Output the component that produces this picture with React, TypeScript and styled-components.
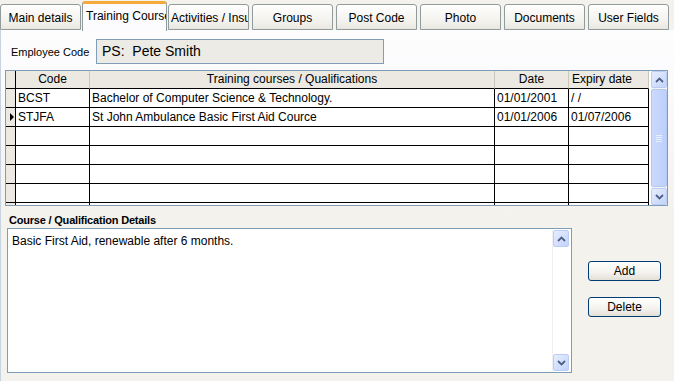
import React from 'react'
import styled, { createGlobalStyle } from 'styled-components'

const GlobalStyle = createGlobalStyle`
  body {
    margin: 0;
    overflow: hidden;
    font-family: 'Liberation Sans', Arial, sans-serif;
  }
`

const tabs = [
  'Main details',
  'Training Courses',
  'Activities / Insurance',
  'Groups',
  'Post Code',
  'Photo',
  'Documents',
  'User Fields',
]

const rows = [
  { code: 'BCST', title: 'Bachelor of Computer Science & Technology.', date: '01/01/2001', expiry: '/ /', current: false },
  { code: 'STJFA', title: 'St John Ambulance Basic First Aid Cource', date: '01/01/2006', expiry: '01/07/2006', current: true },
  { code: '', title: '', date: '', expiry: '', current: false },
  { code: '', title: '', date: '', expiry: '', current: false },
  { code: '', title: '', date: '', expiry: '', current: false },
  { code: '', title: '', date: '', expiry: '', current: false },
  { code: '', title: '', date: '', expiry: '', current: false },
]

const Arrow: React.FC<{ dir: 'up' | 'down' }> = ({ dir }) => (
  <svg width="9" height="6" viewBox="0 0 9 6">
    <path
      d={dir === 'up' ? 'M1 5 L4.5 1.5 L8 5' : 'M1 1 L4.5 4.5 L8 1'}
      stroke="#4d6185"
      strokeWidth="1.8"
      fill="none"
    />
  </svg>
)

const App: React.FC = () => {
  return (
    <Window>
      <GlobalStyle />
      <TabStrip>
        {tabs.map((t, i) => (
          <Tab key={t} $active={i === 1}>
            {t}
          </Tab>
        ))}
      </TabStrip>
      <TabPage>
        <EmployeeRow>
          <FieldLabel>Employee Code</FieldLabel>
          <ReadOnlyInput>PS:&nbsp; Pete Smith</ReadOnlyInput>
        </EmployeeRow>

        <GridFrame>
          <Table>
            <HeaderCell $indicator />
            <HeaderCell>Code</HeaderCell>
            <HeaderCell>Training courses / Qualifications</HeaderCell>
            <HeaderCell>Date</HeaderCell>
            <HeaderCell $left>Expiry date</HeaderCell>
            {rows.map((r, i) => (
              <React.Fragment key={i}>
                <IndicatorCell>{r.current && <Pointer />}</IndicatorCell>
                <Cell>{r.code}</Cell>
                <Cell>{r.title}</Cell>
                <Cell>{r.date}</Cell>
                <Cell>{r.expiry}</Cell>
              </React.Fragment>
            ))}
          </Table>
          <ScrollBar>
            <ScrollButton>
              <Arrow dir="up" />
            </ScrollButton>
            <Thumb>
              <Grip />
            </Thumb>
            <ScrollButton>
              <Arrow dir="down" />
            </ScrollButton>
          </ScrollBar>
        </GridFrame>

        <SectionTitle>Course / Qualification Details</SectionTitle>
        <DetailsRow>
          <MemoBox>
            <MemoText>Basic First Aid, renewable after 6 months.</MemoText>
            <MemoScroll>
              <ScrollButton>
                <Arrow dir="up" />
              </ScrollButton>
              <ScrollButton>
                <Arrow dir="down" />
              </ScrollButton>
            </MemoScroll>
          </MemoBox>
          <ButtonColumn>
            <Button>Add</Button>
            <Button>Delete</Button>
          </ButtonColumn>
        </DetailsRow>
      </TabPage>
    </Window>
  )
}

export default App

const Window = styled.div`
  width: 674px;
  height: 381px;
  background: #f4f2ed;
  display: flex;
  flex-direction: column;
  overflow: hidden;
  font-size: 12px;
  color: #000;
`

const TabStrip = styled.div`
  display: flex;
  align-items: flex-end;
  gap: 3px;
  height: 30px;
  padding-left: 0;
  background: #f4f2ed;
  position: relative;
  z-index: 1;
`

const Tab = styled.div<{ $active: boolean }>`
  box-sizing: border-box;
  flex-shrink: 0;
  width: ${(p) => (p.$active ? 85 : 81)}px;
  height: ${(p) => (p.$active ? 30 : 26)}px;
  margin: ${(p) => (p.$active ? '0 -2px -1px' : '0')};
  padding: ${(p) => (p.$active ? '4px 3px 0' : '5px 2px 0')};
  border: 1px solid #919b9c;
  border-bottom: ${(p) => (p.$active ? 'none' : '1px solid #919b9c')};
  border-top: ${(p) => (p.$active ? '3px solid #f5aa3b' : '1px solid #919b9c')};
  border-radius: 3px 3px 0 0;
  background: ${(p) => (p.$active ? '#fcfcfe' : 'linear-gradient(#ffffff, #f2f1ec 70%, #e9e7df)')};
  text-align: center;
  white-space: nowrap;
  overflow: hidden;
  font-size: 12px;
  line-height: 16px;
  position: relative;
  z-index: ${(p) => (p.$active ? 2 : 1)};
`

const TabPage = styled.div`
  flex: 1;
  border-top: 1px solid #919b9c;
  border-left: 1px solid #c8d3e0;
  margin-top: -1px;
  padding-left: 4px;
  background: linear-gradient(#fdfdfe 0, #fbfafc 60px, #f4f2ed 185px);
  display: flex;
  flex-direction: column;
`

const EmployeeRow = styled.div`
  display: flex;
  align-items: center;
  gap: 10px;
  margin-top: 9px;
  padding-left: 6px;
`

const FieldLabel = styled.span`
  font-size: 11px;
  width: 75px;
  white-space: nowrap;
`

const ReadOnlyInput = styled.div`
  box-sizing: border-box;
  width: 288px;
  height: 25px;
  border: 1px solid #7f9db9;
  background: #ecebe6;
  font-size: 14px;
  line-height: 23px;
  padding-left: 5px;
`

const GridFrame = styled.div`
  box-sizing: border-box;
  width: 663px;
  height: 136px;
  margin-top: 6px;
  border: 1px solid #7f9db9;
  background: #fff;
  display: flex;
  gap: 2px;
`

const Table = styled.div`
  display: grid;
  grid-template-columns: 10px 74px 405px 74px 80px;
  grid-template-rows: 18px;
  grid-auto-rows: 19px;
  height: 134px;
  overflow: hidden;
`

const HeaderCell = styled.div<{ $indicator?: boolean; $left?: boolean }>`
  box-sizing: border-box;
  background: #ebe9e1;
  border-bottom: 1px solid #000;
  border-right: 1px solid ${(p) => (p.$indicator ? '#000' : '#c9c7bd')};
  text-align: ${(p) => (p.$left ? 'left' : 'center')};
  padding-left: ${(p) => (p.$left ? '3px' : '0')};
  line-height: 17px;
  white-space: nowrap;
  overflow: hidden;
`

const IndicatorCell = styled.div`
  box-sizing: border-box;
  background: #ebe9e1;
  border-bottom: 1px solid #000;
  border-right: 1px solid #000;
  display: flex;
  align-items: center;
  justify-content: flex-end;
  padding-right: 1px;
`

const Pointer = styled.span`
  width: 0;
  height: 0;
  border-top: 4px solid transparent;
  border-bottom: 4px solid transparent;
  border-left: 4px solid #000;
`

const Cell = styled.div`
  box-sizing: border-box;
  border-bottom: 1px solid #000;
  border-right: 1px solid #000;
  padding-left: 2px;
  line-height: 18px;
  white-space: nowrap;
  overflow: hidden;
`

const ScrollBar = styled.div`
  width: 16px;
  display: flex;
  flex-direction: column;
  background: #f3f3ef;
`

const ScrollButton = styled.div`
  box-sizing: border-box;
  width: 16px;
  height: 17px;
  flex-shrink: 0;
  border: 1px solid #bccdf5;
  border-radius: 2px;
  background: linear-gradient(135deg, #e6eefe, #c3d3fb);
  display: flex;
  align-items: center;
  justify-content: center;
`

const Thumb = styled.div`
  box-sizing: border-box;
  flex: 1;
  margin: 1px 0;
  border: 1px solid #b4c7f4;
  border-radius: 2px;
  background: linear-gradient(to right, #cbd9fd, #bdd0fb);
  display: flex;
  align-items: center;
  justify-content: center;
`

const Grip = styled.div`
  width: 6px;
  height: 7px;
  background: repeating-linear-gradient(#e9efff 0, #e9efff 1px, transparent 1px, transparent 2px);
`

const SectionTitle = styled.div`
  margin: 6px 0 0 4px;
  font-size: 11px;
  font-weight: bold;
  letter-spacing: -0.2px;
  line-height: 16px;
  height: 16px;
`

const DetailsRow = styled.div`
  display: flex;
  align-items: flex-start;
  gap: 16px;
  margin-top: 0;
  padding-left: 2px;
`

const MemoBox = styled.div`
  box-sizing: border-box;
  width: 565px;
  height: 145px;
  border: 1px solid #7f9db9;
  background: #fff;
  display: flex;
  padding: 1px 2px 1px 0;
`

const MemoText = styled.div`
  flex: 1;
  padding: 3px 4px;
  font-size: 12px;
  line-height: 16px;
`

const MemoScroll = styled.div`
  width: 16px;
  display: flex;
  flex-direction: column;
  justify-content: space-between;
  border-left: 1px solid #f0f0f0;
`

const ButtonColumn = styled.div`
  display: flex;
  flex-direction: column;
  gap: 16px;
  padding-top: 33px;
`

const Button = styled.div`
  box-sizing: border-box;
  width: 73px;
  height: 20px;
  border: 1px solid #003c74;
  border-radius: 3px;
  background: linear-gradient(#ffffff, #f3f2ee 60%, #e3e0d6);
  text-align: center;
  line-height: 18px;
  font-size: 12px;
`
